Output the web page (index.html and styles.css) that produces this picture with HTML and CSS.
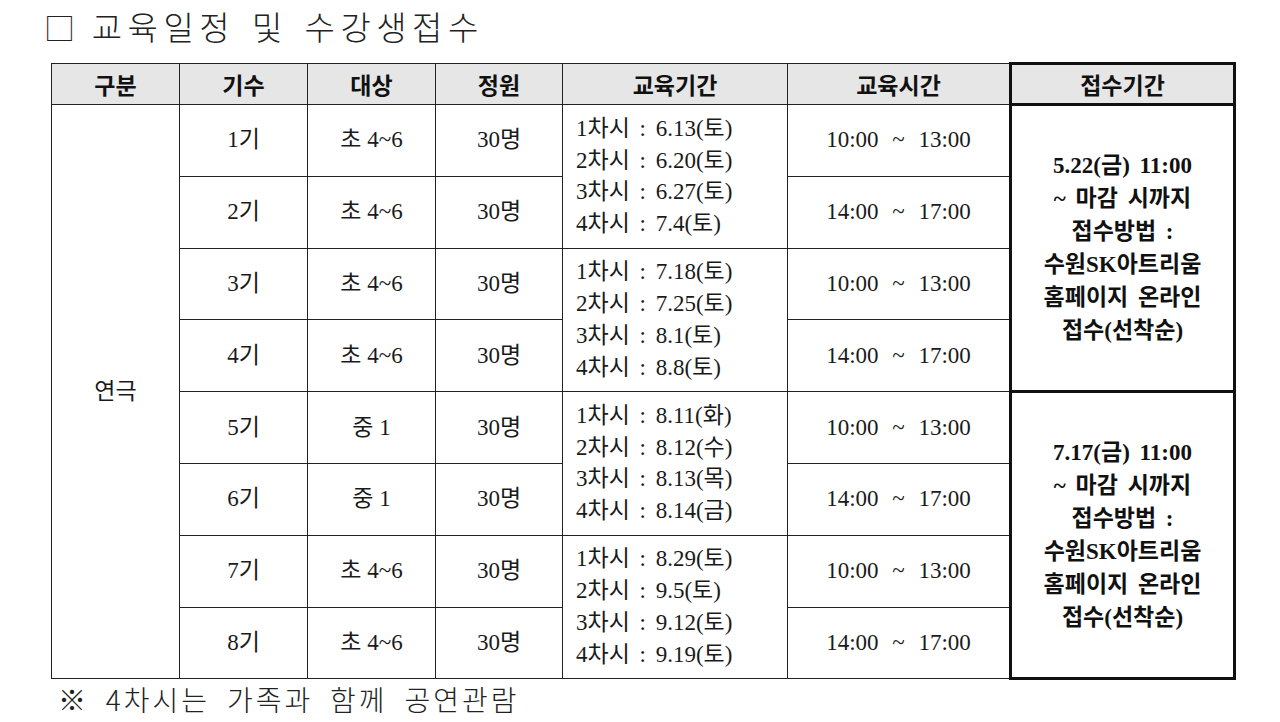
FILE: index.html
```html
<!DOCTYPE html>
<html lang="ko">
<head>
<meta charset="utf-8">
<title>교육일정 및 수강생접수</title>
<link rel="stylesheet" href="styles.css">
</head>
<body>
<h1 class="title"><span class="box">□</span> 교육일정 및 수강생접수</h1>
<table class="sched">
  <colgroup>
    <col class="c1"><col class="c2"><col class="c3"><col class="c4"><col class="c5"><col class="c6"><col class="c7">
  </colgroup>
  <thead>
    <tr class="head">
      <th>구분</th><th>기수</th><th>대상</th><th>정원</th><th>교육기간</th><th>교육시간</th><th class="rec">접수기간</th>
    </tr>
  </thead>
  <tbody>
    <tr>
      <td rowspan="8">연극</td>
      <td>1기</td><td>초 4~6</td><td>30명</td>
      <td rowspan="2" class="dates">1차시 : 6.13(토)<br>2차시 : 6.20(토)<br>3차시 : 6.27(토)<br>4차시 : 7.4(토)</td>
      <td class="time">10:00 ~ 13:00</td>
      <td rowspan="4" class="rec info">5.22(금) 11:00<br>~ 마감 시까지<br>접수방법 :<br>수원SK아트리움<br>홈페이지 온라인<br>접수(선착순)</td>
    </tr>
    <tr><td>2기</td><td>초 4~6</td><td>30명</td><td class="time">14:00 ~ 17:00</td></tr>
    <tr>
      <td>3기</td><td>초 4~6</td><td>30명</td>
      <td rowspan="2" class="dates">1차시 : 7.18(토)<br>2차시 : 7.25(토)<br>3차시 : 8.1(토)<br>4차시 : 8.8(토)</td>
      <td class="time">10:00 ~ 13:00</td>
    </tr>
    <tr><td>4기</td><td>초 4~6</td><td>30명</td><td class="time">14:00 ~ 17:00</td></tr>
    <tr>
      <td>5기</td><td>중 1</td><td>30명</td>
      <td rowspan="2" class="dates">1차시 : 8.11(화)<br>2차시 : 8.12(수)<br>3차시 : 8.13(목)<br>4차시 : 8.14(금)</td>
      <td class="time">10:00 ~ 13:00</td>
      <td rowspan="4" class="rec info">7.17(금) 11:00<br>~ 마감 시까지<br>접수방법 :<br>수원SK아트리움<br>홈페이지 온라인<br>접수(선착순)</td>
    </tr>
    <tr><td>6기</td><td>중 1</td><td>30명</td><td class="time">14:00 ~ 17:00</td></tr>
    <tr>
      <td>7기</td><td>초 4~6</td><td>30명</td>
      <td rowspan="2" class="dates">1차시 : 8.29(토)<br>2차시 : 9.5(토)<br>3차시 : 9.12(토)<br>4차시 : 9.19(토)</td>
      <td class="time">10:00 ~ 13:00</td>
    </tr>
    <tr><td>8기</td><td>초 4~6</td><td>30명</td><td class="time">14:00 ~ 17:00</td></tr>
  </tbody>
</table>
<p class="note">※ 4차시는 가족과 함께 공연관람</p>
</body>
</html>
```

FILE: styles.css
```css
html, body {
  margin: 0;
  padding: 0;
  background: #ffffff;
}

body {
  width: 1280px;
  color: #1a1a1a;
  font-family: "Liberation Serif", "Noto Sans CJK KR", serif;
}

.title {
  margin: 0;
  padding-left: 44px;
  height: 52px;
  line-height: 52px;
  font-family: "Noto Sans CJK KR", sans-serif;
  font-size: 33px;
  font-weight: 300;
  letter-spacing: 5.5px;
  word-spacing: 2px;
  color: #222;
  white-space: nowrap;
}

.box {
  letter-spacing: 0;
  font-size: 31px;
  font-weight: 300;
}

.sched {
  margin: 10px 0 0 51px;
  width: 1183px;
  border-collapse: collapse;
  table-layout: fixed;
}

.c1, .c2, .c3 { width: 128px; }
.c4 { width: 127px; }
.c5 { width: 225px; }
.c6 { width: 223px; }
.c7 { width: 224px; }

.sched th,
.sched td {
  border: 1px solid #222;
  padding: 0;
  text-align: center;
  vertical-align: middle;
}

.head {
  height: 41px;
}

.sched th {
  background: #e6e6e6;
  font-family: "Noto Sans CJK KR", sans-serif;
  font-size: 23px;
  font-weight: 700;
  color: #111;
  line-height: 1;
}

.sched tbody tr {
  height: 71.8px;
}

.sched td {
  font-size: 23px;
  line-height: 32px;
  color: #1a1a1a;
}

.sched td.dates {
  text-align: left;
  padding-left: 13px;
  line-height: 31.8px;
  word-spacing: 4px;
}

.sched td.time {
  word-spacing: 8px;
}

.sched .rec {
  border: 3px solid #111;
}

.sched td.info {
  font-family: "Liberation Serif", "Noto Sans CJK KR", serif;
  font-weight: 700;
  font-size: 23px;
  line-height: 33px;
  word-spacing: 4px;
  color: #111;
}

.note {
  margin: 0;
  padding-left: 58px;
  height: 40px;
  line-height: 38px;
  font-family: "Noto Sans CJK KR", sans-serif;
  font-size: 28px;
  font-weight: 300;
  letter-spacing: 3px;
  word-spacing: 6px;
  color: #222;
  white-space: nowrap;
}
```
